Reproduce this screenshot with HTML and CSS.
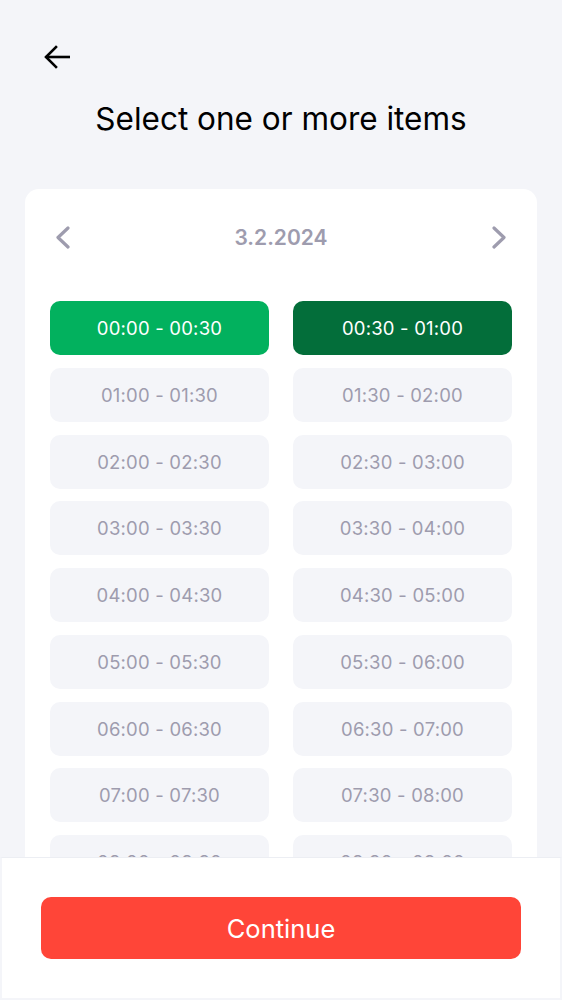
FILE: index.html
```html
<!DOCTYPE html>
<html lang="en">
<head>
<meta charset="utf-8">
<title>Select items</title>
<link rel="stylesheet" href="styles.css">
</head>
<body>
<header class="top">
  <button class="back" aria-label="Back">
    <svg width="26" height="24" viewBox="0 0 26 24" fill="none" stroke="#000" stroke-width="2.6" stroke-linecap="square" stroke-linejoin="miter"><path d="M25 12H3"/><path d="M12 2L2 12l10 10"/></svg>
  </button>
  <h1 class="title">Select one or more items</h1>
</header>
<main class="card">
  <div class="date-row">
    <button class="nav" aria-label="Previous day">
      <svg width="16" height="23" viewBox="0 0 16 23" fill="none" stroke="#9e9cae" stroke-width="3.2" stroke-linecap="round" stroke-linejoin="round"><path d="M13 2L3 11.5 13 21"/></svg>
    </button>
    <div class="date">3.2.2024</div>
    <button class="nav" aria-label="Next day">
      <svg width="16" height="23" viewBox="0 0 16 23" fill="none" stroke="#9e9cae" stroke-width="3.2" stroke-linecap="round" stroke-linejoin="round"><path d="M3 2l10 9.5L3 21"/></svg>
    </button>
  </div>
  <div class="slots">
    <div class="slot sel-a">00:00 - 00:30</div>
    <div class="slot sel-b">00:30 - 01:00</div>
    <div class="slot">01:00 - 01:30</div>
    <div class="slot">01:30 - 02:00</div>
    <div class="slot">02:00 - 02:30</div>
    <div class="slot">02:30 - 03:00</div>
    <div class="slot">03:00 - 03:30</div>
    <div class="slot">03:30 - 04:00</div>
    <div class="slot">04:00 - 04:30</div>
    <div class="slot">04:30 - 05:00</div>
    <div class="slot">05:00 - 05:30</div>
    <div class="slot">05:30 - 06:00</div>
    <div class="slot">06:00 - 06:30</div>
    <div class="slot">06:30 - 07:00</div>
    <div class="slot">07:00 - 07:30</div>
    <div class="slot">07:30 - 08:00</div>
    <div class="slot">08:00 - 08:30</div>
    <div class="slot">08:30 - 09:00</div>
    <div class="slot">09:00 - 09:30</div>
    <div class="slot">09:30 - 10:00</div>
  </div>
</main>
<footer class="footer">
  <button class="continue">Continue</button>
</footer>
</body>
</html>
```

FILE: styles.css
```css
* { box-sizing: border-box; }
html, body { margin: 0; padding: 0; }
body {
  background: #f4f5f9;
  font-family: Inter, "Noto Sans", "Liberation Sans", sans-serif;
  color: #000;
  height: 100vh;
  overflow: hidden;
}
button {
  font-family: inherit;
  border: 0;
  background: none;
  padding: 0;
  margin: 0;
  cursor: pointer;
}
.top {
  padding: 45px 0 0 0;
}
.back {
  display: block;
  margin-left: 44px;
  width: 26px;
  height: 24px;
}
.back svg { display: block; }
.title {
  margin: 31px 0 0;
  font-size: 31.5px;
  line-height: 38px;
  font-weight: 400;
  text-align: center;
}
.card {
  margin: 51px 25px 0;
  background: #fff;
  border-radius: 14px;
  padding: 24px 25px 30px;
}
.date-row {
  height: 48px;
  display: flex;
  align-items: center;
  justify-content: space-between;
  padding: 0 5px;
}
.nav {
  width: 16px;
  height: 23px;
  display: flex;
}
.nav svg { display: block; }
.date {
  font-size: 21px;
  font-weight: 600;
  color: #9e9cae;
}
.slots {
  margin-top: 40px;
  display: grid;
  grid-template-columns: 1fr 1fr;
  column-gap: 24px;
  row-gap: 12.75px;
}
.slot {
  height: 54px;
  border-radius: 10px;
  background: #f4f5f9;
  color: #9e9cae;
  font-size: 18.5px;
  display: flex;
  align-items: center;
  justify-content: center;
  letter-spacing: 0.2px;
}
.slot.sel-a { background: #02b15e; color: #fff; }
.slot.sel-b { background: #036e3a; color: #fff; }
.footer {
  position: fixed;
  left: 0;
  right: 0;
  bottom: 0;
  height: 143px;
  background: #fff;
  border: 2px solid #f4f5f9;
  border-top: 1px solid #eceef3;
  padding: 39px 39px 0;
}
.continue {
  display: flex;
  align-items: center;
  justify-content: center;
  width: 100%;
  height: 62px;
  border-radius: 10px;
  background: #ff4538;
  color: #fff;
  font-size: 25.5px;
  font-weight: 400;
}
```
